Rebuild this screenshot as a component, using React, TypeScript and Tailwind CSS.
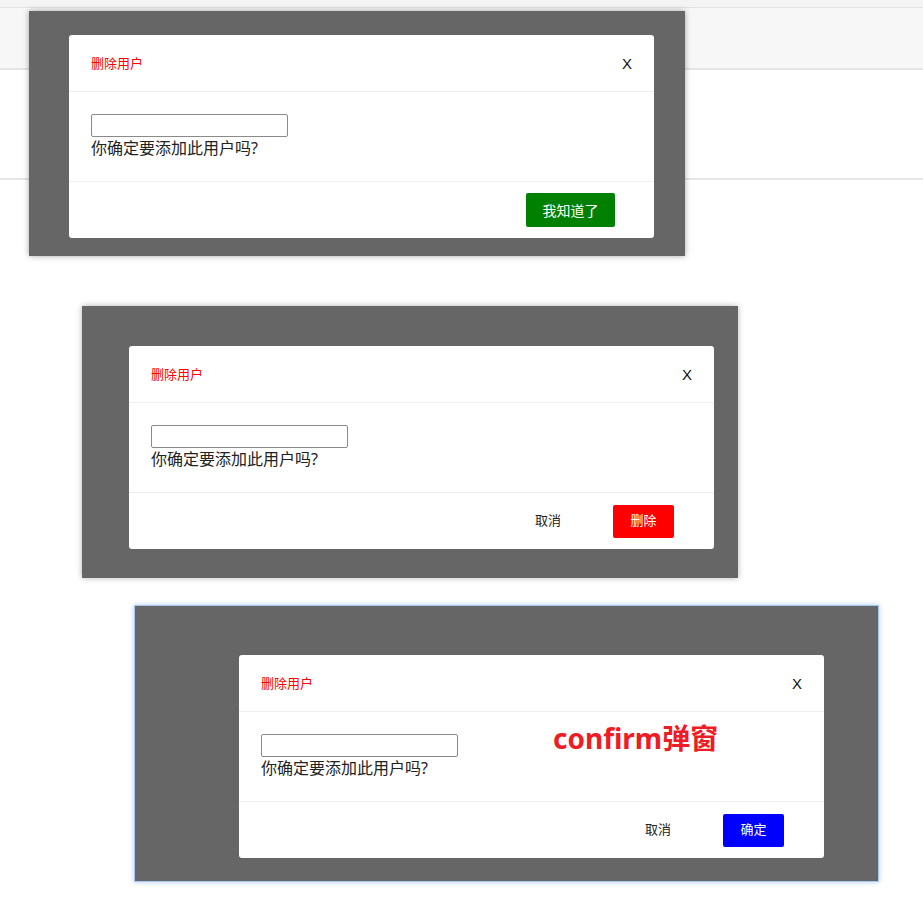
import React from "react";

const FONT = { fontFamily: '"Noto Sans", "Noto Sans CJK SC", sans-serif' };

function Dialog({ footer }: { footer: React.ReactNode }) {
  return (
    <div className="w-[585px] bg-white rounded-[3px] flex flex-col">
      <div className="h-[57px] flex items-center justify-between pl-[22px] pr-[22px] border-b border-[#eeeeee]">
        <span className="text-[13px] text-[#ff0000] leading-none">删除用户</span>
        <span className="text-[15px] text-[#111] leading-none" style={{ fontFamily: '"Liberation Sans", sans-serif' }}>X</span>
      </div>
      <div className="h-[89px] pl-[22px] pt-[22px] flex flex-col items-start">
        <input className="w-[197px] h-[23px] border border-[#8a8a8a] rounded-[2px] bg-white" />
        <span className="text-[16px] leading-[22px] text-[#222]">你确定要添加此用户吗?</span>
      </div>
      <div className="h-[57px] border-t border-[#eeeeee] flex items-center justify-end pr-[39px]">{footer}</div>
    </div>
  );
}

export default function App() {
  return (
    <div className="w-[923px] h-[898px] bg-white relative overflow-hidden" style={FONT}>
      <div className="grid">
        <div className="col-start-1 row-start-1 flex flex-col">
          <div className="h-[8px] bg-[#f4f4f4] border-b border-[#e2e2e2]" />
          <div className="h-[62px] bg-[#f7f7f7] border-b-2 border-[#e4e4e4]" />
          <div className="h-[110px] bg-white border-b-2 border-[#e6e6e6]" />
        </div>
        <div className="col-start-1 row-start-1 pt-[11px] pl-[29px]">
          <div className="w-[656px] h-[245px] bg-[#666666] pl-[40px] pt-[24px] shadow-[0_0_6px_rgba(0,0,0,0.35)]">
            <Dialog
              footer={
                <button className="w-[89px] h-[34px] bg-[#008000] rounded-[2px] text-white text-[14px]">我知道了</button>
              }
            />
          </div>
        </div>
      </div>

      <div className="mt-[50px] ml-[82px] w-[656px] h-[272px] bg-[#666666] pl-[47px] pt-[40px] shadow-[0_0_6px_rgba(0,0,0,0.3)]">
        <Dialog
          footer={
            <div className="flex items-center mr-[1px]">
              <span className="text-[13px] text-[#222] mr-[52px]">取消</span>
              <button className="w-[61px] h-[33px] bg-[#ff0000] rounded-[2px] text-white text-[13px]">删除</button>
            </div>
          }
        />
      </div>

      <div className="relative mt-[27px] ml-[134px] w-[745px] h-[277px] bg-[#666666] pl-[104px] pt-[49px] border border-[#a7c7f2] shadow-[0_0_5px_rgba(120,170,240,0.6)]">
        <Dialog
          footer={
            <div className="flex items-center mr-[1px]">
              <span className="text-[13px] text-[#222] mr-[52px]">取消</span>
              <button className="w-[61px] h-[33px] bg-[#0000ff] rounded-[2px] text-white text-[13px]">确定</button>
            </div>
          }
        />
        <span className="absolute left-[418px] top-[118px] text-[28px] font-bold text-[#ee1c25] leading-none">confirm弹窗</span>
      </div>
    </div>
  );
}
